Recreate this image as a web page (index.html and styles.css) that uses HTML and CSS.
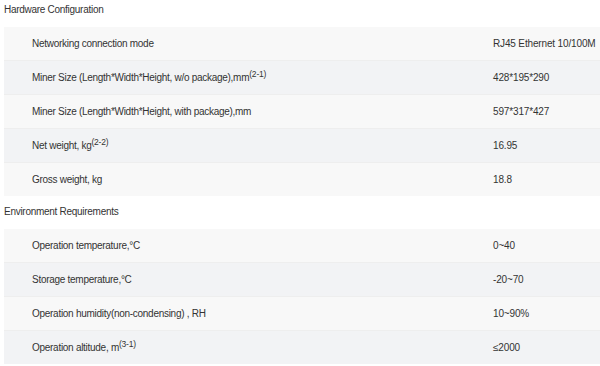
FILE: index.html
```html
<!DOCTYPE html>
<html>
<head>
<meta charset="utf-8">
<link rel="stylesheet" href="styles.css">
</head>
<body>
<div class="page">
  <div class="section-title first">Hardware Configuration</div>
  <div class="spec">
    <div class="row"><div class="label">Networking connection mode</div><div class="value">RJ45 Ethernet 10/100M</div></div>
    <div class="row"><div class="label">Miner Size (Length*Width*Height, w/o package),mm<sup>(2-1)</sup></div><div class="value">428*195*290</div></div>
    <div class="row"><div class="label">Miner Size (Length*Width*Height, with package),mm</div><div class="value">597*317*427</div></div>
    <div class="row"><div class="label">Net weight, kg<sup>(2-2)</sup></div><div class="value">16.95</div></div>
    <div class="row"><div class="label">Gross weight, kg</div><div class="value">18.8</div></div>
  </div>
  <div class="section-title">Environment Requirements</div>
  <div class="spec">
    <div class="row"><div class="label">Operation temperature,°C</div><div class="value">0~40</div></div>
    <div class="row"><div class="label">Storage temperature,°C</div><div class="value">-20~70</div></div>
    <div class="row"><div class="label">Operation humidity(non-condensing) , RH</div><div class="value">10~90%</div></div>
    <div class="row"><div class="label">Operation altitude, m<sup>(3-1)</sup></div><div class="value">≤2000</div></div>
  </div>
</div>
</body>
</html>
```

FILE: styles.css
```css
html, body {
  margin: 0;
  padding: 0;
  background: #ffffff;
}
.page {
  padding-left: 4px;
  font-family: Arial, "Liberation Sans", sans-serif;
  font-size: 10px;
  letter-spacing: -0.28px;
  color: #333333;
}
.section-title {
  height: 20px;
  line-height: 20px;
  margin-top: 6px;
  margin-bottom: 7px;
}
.section-title.first {
  margin-top: 0;
}
.spec {
  display: flex;
  flex-direction: column;
}
.row {
  display: grid;
  grid-template-columns: 489px 1fr;
  height: 33px;
  align-items: center;
  background: #f8f8f8;
  border-bottom: 1px solid #eeeeee;
}
.row:nth-child(even) {
  background: #f2f3f5;
}
.row:last-child {
  border-bottom: none;
}
.label {
  padding-left: 28px;
  white-space: nowrap;
}
.value {
  white-space: nowrap;
  letter-spacing: -0.15px;
}
sup {
  font-size: 8.5px;
  letter-spacing: -0.2px;
  line-height: 0;
  vertical-align: 4px;
}
```
